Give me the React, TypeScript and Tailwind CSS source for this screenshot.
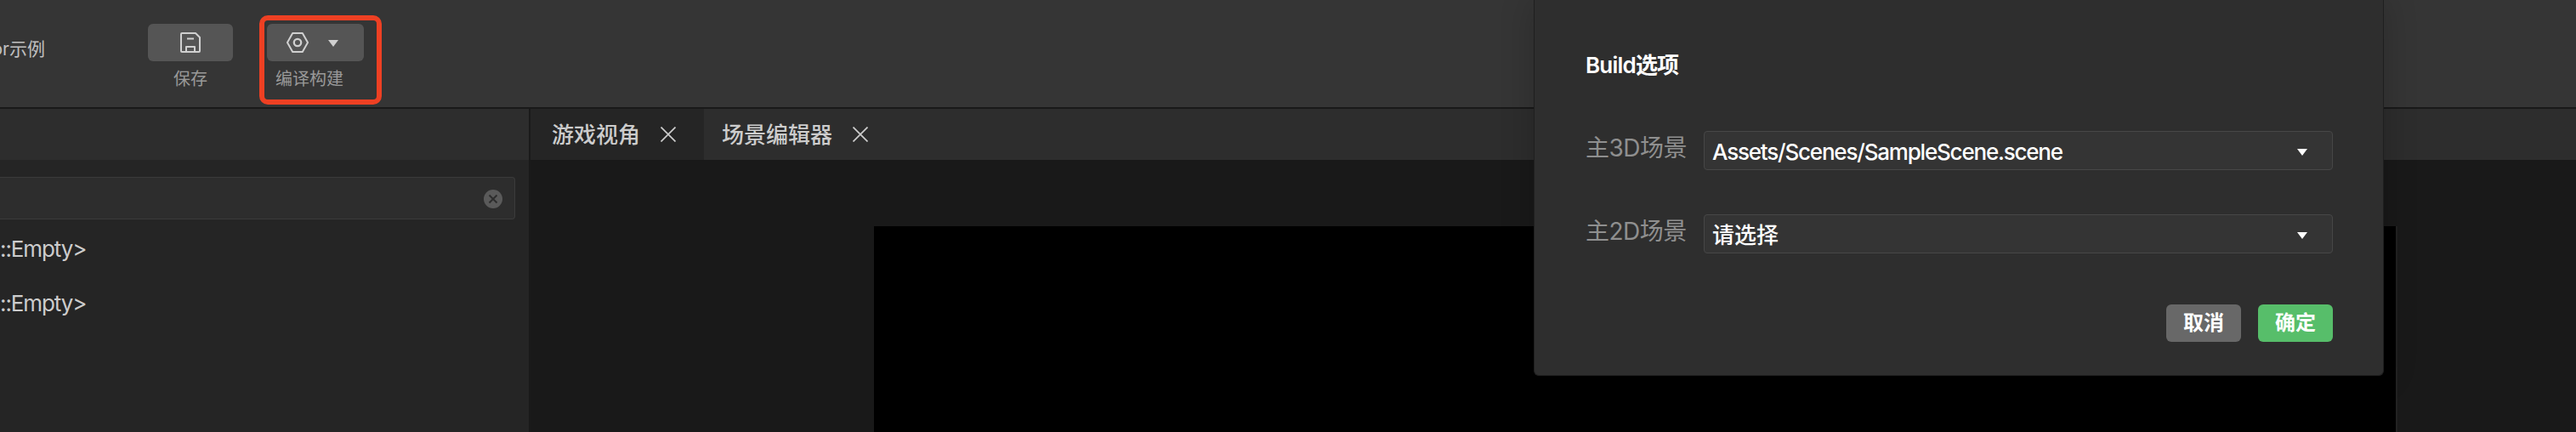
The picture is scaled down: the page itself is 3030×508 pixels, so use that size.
import React from "react";

const SaveIcon = () => (
  <svg width="26" height="26" viewBox="0 0 26 26" fill="none" stroke="#d0d0d0" strokeWidth="2" strokeLinejoin="round">
    <path d="M2 3V23a1 1 0 0 0 1 1H23a1 1 0 0 0 1-1V7L19 2H3a1 1 0 0 0-1 1Z" />
    <path d="M9 8.5h8" />
    <path d="M8 24v-6h10v6" />
  </svg>
);

const BuildIcon = () => (
  <svg width="26" height="26" viewBox="0 0 26 26" fill="none" stroke="#d0d0d0" strokeWidth="2" strokeLinejoin="round">
    <path d="M7.2 2h11.6L25 13l-6.2 11H7.2L1 13Z" />
    <circle cx="13" cy="13" r="4.2" strokeWidth="2.3" />
  </svg>
);

const Caret = ({ className }: { className: string }) => (
  <svg viewBox="0 0 12 10" preserveAspectRatio="none" fill="currentColor" className={className}>
    <path d="M0 0h12L6 10Z" />
  </svg>
);

const CloseIcon = () => (
  <svg width="18" height="18" viewBox="0 0 18 18" stroke="#cccccc" strokeWidth="1.7" className="shrink-0">
    <path d="M0.5 0.5l17 17M17.5 0.5l-17 17" />
  </svg>
);

function Field({ label, value, spacing }: { label: string; value: string; spacing: string }) {
  return (
    <div className="flex h-[46px]">
      <div className="w-[140px] pt-[1px] pl-[1px] text-[28px] leading-[38px] tracking-[-0.5px] text-[#8f8f8f]">
        {label}
      </div>
      <div className="flex w-[740px] items-center justify-between rounded border border-[#474747] bg-[#343434] pr-[29px] pl-[9px] text-white">
        <span className={`pt-[3px] text-[26px] leading-[38px] font-medium ${spacing}`}>{value}</span>
        <Caret className="mt-1 h-[8px] w-[12px]" />
      </div>
    </div>
  );
}

export default function App() {
  return (
    <div className="relative flex h-[508px] w-[3030px] flex-col overflow-hidden bg-[#191919] font-[Inter,'Noto_Sans_CJK_SC',sans-serif] whitespace-nowrap">
      <header className="flex h-[128px] shrink-0 items-start border-b-2 border-[#191919] bg-[#353535]">
        <div className="flex w-[53px] justify-end overflow-hidden pt-[42px] text-[21px] leading-[32px] text-[#c0c0c0]">
          or示例
        </div>
        <div className="ml-[121px] flex w-[100px] flex-col items-center pt-[28px]">
          <button className="flex h-[44px] w-full items-center justify-center rounded-md bg-[#555555]">
            <SaveIcon />
          </button>
          <span className="mt-[6px] text-[20px] leading-[30px] text-[#999999]">保存</span>
        </div>
        <div className="ml-[40px] flex w-[114px] flex-col pt-[28px]">
          <button className="flex h-[44px] w-full items-center rounded-md bg-[#555555] pl-[23px] text-[#d0d0d0]">
            <BuildIcon />
            <Caret className="mt-[2px] ml-[23px] h-[8px] w-[12px]" />
          </button>
          <span className="mt-[6px] pl-[10px] text-[20px] leading-[30px] text-[#999999]">编译构建</span>
        </div>
      </header>

      <div className="flex flex-1">
        <aside className="flex w-[624px] flex-col border-r-2 border-[#1a1a1a] bg-[#252525]">
          <div className="h-[60px] bg-[#2d2d2d]" />
          <div className="mt-5 mr-4 flex h-[50px] items-center justify-end rounded-r border border-l-0 border-[#3b3b3b] bg-[#2d2d2d] pt-[2px] pr-[14px]">
            <svg width="22" height="22" viewBox="0 0 22 22">
              <circle cx="11" cy="11" r="11" fill="#5a5a5a" />
              <path d="M6.5 6.5l9 9M15.5 6.5l-9 9" stroke="#2d2d2d" strokeWidth="2" />
            </svg>
          </div>
          <ul className="mt-[3px] text-[26px] text-[#cccccc]">
            <li className="h-[64px] leading-[64px] tracking-[-1.1px]">::Empty&gt;</li>
            <li className="h-[64px] leading-[64px] tracking-[-1.1px]">::Empty&gt;</li>
          </ul>
        </aside>

        <main className="flex flex-1 flex-col">
          <nav className="flex h-[60px] bg-[#2d2d2d] text-[26px] leading-[38px] font-medium text-[#cccccc]">
            <div className="flex w-[204px] items-center bg-[#252525] pl-[25px]">
              <span className="mr-6 pt-[1px]">游戏视角</span>
              <CloseIcon />
            </div>
            <div className="flex items-center pl-[21px]">
              <span className="mr-6 pt-[1px]">场景编辑器</span>
              <CloseIcon />
            </div>
          </nav>
          <div className="flex flex-1 pt-[78px] pl-[404px]">
            <div className="w-[1792px] border-r-2 border-[#222222] bg-black" />
          </div>
        </main>
      </div>

      <div className="absolute top-[18px] left-[305px] h-[105px] w-[144px] rounded-[10px] border-[6px] border-[#ee4023]" />

      <section className="absolute top-0 left-[1804px] flex h-[442px] w-[1000px] flex-col rounded-b-md border border-t-0 border-[#1f1f1f] bg-[#2e2e2e] px-[59px] shadow-[0_0_40px_rgba(0,0,0,0.2)]">
        <h2 className="mt-[58px] h-[38px] pl-[1px] text-[26px] leading-[38px] font-semibold tracking-[-0.8px] text-white">
          Build选项
        </h2>
        <div className="mt-[58px] flex flex-col gap-[52px]">
          <Field label="主3D场景" value="Assets/Scenes/SampleScene.scene" spacing="tracking-[-1.2px]" />
          <Field label="主2D场景" value="请选择" spacing="tracking-normal" />
        </div>
        <div className="mt-[60px] flex justify-end gap-5 text-[24px] leading-[36px] font-bold text-white">
          <button className="h-[44px] w-[88px] rounded-md bg-[#686868]">取消</button>
          <button className="h-[44px] w-[88px] rounded-md bg-[#57be6a]">确定</button>
        </div>
      </section>
    </div>
  );
}
